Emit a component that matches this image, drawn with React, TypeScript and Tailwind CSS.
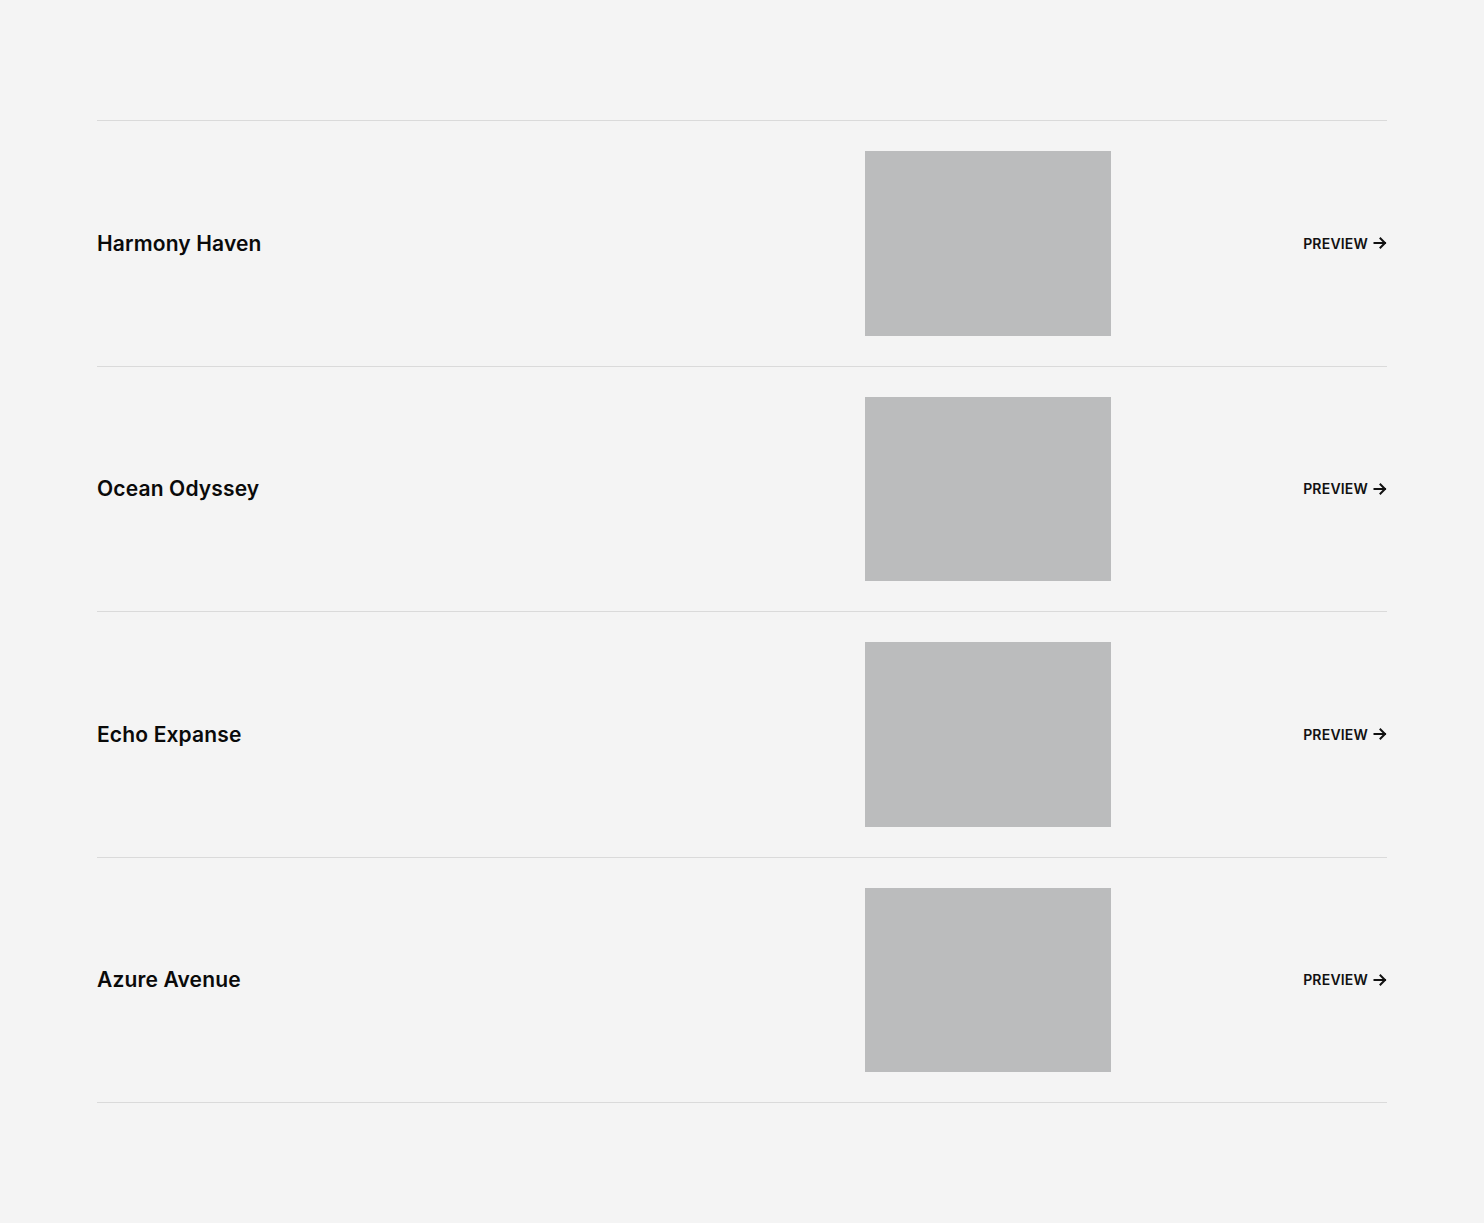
import React from "react";

const items = ["Harmony Haven", "Ocean Odyssey", "Echo Expanse", "Azure Avenue"];

function Arrow() {
  return (
    <svg width="14" height="14" viewBox="0 0 14 14" fill="none" stroke="currentColor" strokeWidth="2" strokeLinecap="square">
      <path d="M1.5 7H12" />
      <path d="M7.5 2.5L12 7L7.5 11.5" />
    </svg>
  );
}

export default function App() {
  return (
    <div className="min-h-[1223px] bg-[#f4f4f4] px-[97px] pt-[120px] pb-[120px]" style={{ fontFamily: "Inter, 'Noto Sans', sans-serif" }}>
      <div className="border-t border-[#dadada]">
        {items.map((t) => (
          <div key={t} className="grid grid-cols-[768px_246px_1fr] items-center border-b border-[#dadada] py-[30px]">
            <div className="text-[21px] font-semibold tracking-[0.15px] text-[#0a0a0a]">{t}</div>
            <div className="h-[184.5px] w-[246px] bg-[#bbbcbd]" />
            <div className="flex items-center justify-end gap-[5px] text-[14px] font-semibold uppercase text-[#111]">
              <span className="tracking-[0.2px]">Preview</span>
              <Arrow />
            </div>
          </div>
        ))}
      </div>
    </div>
  );
}
